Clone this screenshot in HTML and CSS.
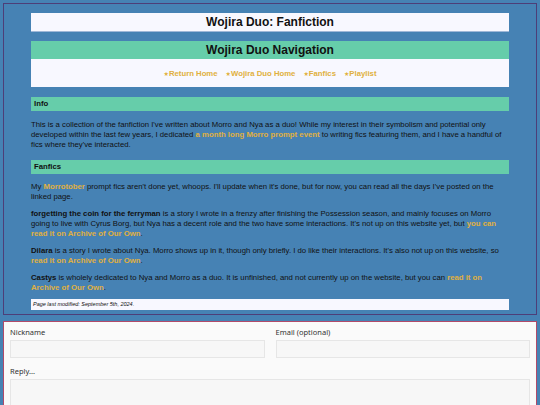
FILE: index.html
```html
<!DOCTYPE html>
<html>
<head>
<meta charset="utf-8">
<link rel="stylesheet" href="styles.css">
</head>
<body>
<div class="page">
  <div class="title-box">Wojira Duo: Fanfiction</div>
  <div class="nav">
    <div class="nav-head">Wojira Duo Navigation</div>
    <div class="nav-links">
      <a class="nlink" href="#"><span class="star">&#9733;</span>Return Home</a>
      <a class="nlink" href="#"><span class="star">&#9733;</span>Wojira Duo Home</a>
      <a class="nlink" href="#"><span class="star">&#9733;</span>Fanfics</a>
      <a class="nlink" href="#"><span class="star">&#9733;</span>Playlist</a>
    </div>
  </div>
  <div class="sec-head">Info</div>
  <p class="txt">This is a collection of the fanfiction I've written about Morro and Nya as a duo! While my interest in their symbolism and potential only developed within the last few years, I dedicated <a class="lk" href="#">a month long Morro prompt event</a> to writing fics featuring them, and I have a handful of fics where they've interacted.</p>
  <div class="sec-head">Fanfics</div>
  <p class="txt">My <a class="lk" href="#">Morrotober</a> prompt fics aren't done yet, whoops. I'll update when it's done, but for now, you can read all the days I've posted on the linked page.</p>
  <p class="txt"><b>forgetting the coin for the ferryman</b> is a story I wrote in a frenzy after finishing the Possession season, and mainly focuses on Morro going to live with Cyrus Borg, but Nya has a decent role and the two have some interactions. It's not up on this website yet, but <a class="lk" href="#">you can read it on Archive of Our Own</a>.</p>
  <p class="txt"><b>Dilara</b> is a story I wrote about Nya. Morro shows up in it, though only briefly. I do like their interactions. It's also not up on this website, so <a class="lk" href="#">read it on Archive of Our Own</a>.</p>
  <p class="txt"><b>Castys</b> is wholely dedicated to Nya and Morro as a duo. It is unfinished, and not currently up on the website, but you can <a class="lk" href="#">read it on Archive of Our Own</a>.</p>
  <div class="foot">Page last modified: September 5th, 2024.</div>
</div>
<form class="comments">
  <div class="row">
    <label class="field">
      <span class="lbl">Nickname</span>
      <input class="inp" type="text">
    </label>
    <label class="field">
      <span class="lbl">Email (optional)</span>
      <input class="inp" type="text">
    </label>
  </div>
  <label class="field">
    <span class="lbl">Reply...</span>
    <textarea class="area"></textarea>
  </label>
</form>
</body>
</html>
```
FILE: styles.css
```css
html, body {
  margin: 0;
  padding: 0;
}
body {
  background: #4682b4;
  padding: 3px;
  font-family: "Liberation Sans", Arial, sans-serif;
  color: #111;
  overflow: hidden;
}
.page {
  border: 1px solid #4d3e78;
  padding: 9px 27px 4px 27px;
}
.title-box {
  background: #f8f8ff;
  border-bottom: 1px solid #9fb8d8;
  text-align: center;
  font-weight: bold;
  font-size: 12px;
  line-height: 18px;
}
.nav {
  margin-top: 9px;
}
.nav-head {
  background: #66cdaa;
  text-align: center;
  font-weight: bold;
  font-size: 12px;
  line-height: 18px;
}
.nav-links {
  background: #f8f8ff;
  height: 28px;
  display: flex;
  justify-content: center;
  align-items: center;
  gap: 8px;
}
.nlink {
  color: #e0b040;
  font-weight: bold;
  font-size: 7.75px;
  text-decoration: none;
}
.star {
  font-size: 6px;
  font-family: "Liberation Sans", "DejaVu Sans", sans-serif;
}
.sec-head {
  background: #66cdaa;
  font-weight: bold;
  font-size: 7.75px;
  line-height: 14px;
  padding-left: 3px;
  margin-top: 10px;
}
.txt {
  font-size: 7.75px;
  line-height: 10px;
  margin: 7px 0 0 0;
}
.sec-head + .txt {
  margin-top: 8.5px;
}
.lk {
  color: #e0b040;
  font-weight: bold;
  text-decoration: none;
}
.foot {
  background: #f8f8ff;
  font-style: italic;
  font-size: 5.5px;
  line-height: 11px;
  padding-left: 2px;
  margin-top: 5.5px;
}
.comments {
  margin-top: 6px;
  border: 1px solid #b04a6a;
  background: #fafafa;
  padding: 5px 6px 6px 6px;
  display: flex;
  flex-direction: column;
  gap: 8px;
  font-family: "Noto Sans", "DejaVu Sans", sans-serif;
}
.row {
  display: flex;
  gap: 11px;
}
.field {
  display: flex;
  flex-direction: column;
  gap: 3px;
  flex: 1;
}
.lbl {
  font-size: 7.5px;
  color: #333;
  line-height: 10px;
}
.inp {
  height: 18px;
  box-sizing: border-box;
  border: 1px solid #e6e6e6;
  background: #f7f7f7;
  margin: 0;
}
.area {
  height: 60px;
  box-sizing: border-box;
  border: 1px solid #e6e6e6;
  background: #f7f7f7;
  margin: 0;
  resize: none;
}
```
